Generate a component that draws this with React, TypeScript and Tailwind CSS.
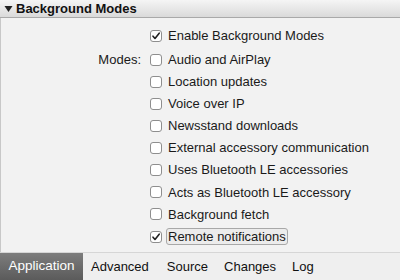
import React from "react";

const Box = ({ checked }: { checked?: boolean }) => (
  <div className="w-[12px] h-[12px] rounded-[3px] border border-[#8e8e8e] bg-white flex items-center justify-center shrink-0">
    {checked && (
      <svg width="10" height="10" viewBox="0 0 10 10">
        <path d="M2 5.2 L4 7.5 L8.2 2.2" fill="none" stroke="#222" strokeWidth="1.6" strokeLinecap="round" strokeLinejoin="round" />
      </svg>
    )}
  </div>
);

const modes: [string, boolean][] = [
  ["Audio and AirPlay", false],
  ["Location updates", false],
  ["Voice over IP", false],
  ["Newsstand downloads", false],
  ["External accessory communication", false],
  ["Uses Bluetooth LE accessories", false],
  ["Acts as Bluetooth LE accessory", false],
  ["Background fetch", false],
  ["Remote notifications", true],
];

export default function App() {
  return (
    <div className="w-[400px] h-[280px] flex flex-col bg-[#f2f2f2] text-[13px] text-[#1a1a1a] overflow-hidden" style={{ fontFamily: '"Liberation Sans", Arial, sans-serif' }}>
      <div className="h-[18px] shrink-0 flex items-center bg-gradient-to-b from-[#f5f5f5] to-[#dadada] border-b border-[#a9a9a9] pl-[4px]">
        <svg width="9" height="8" viewBox="0 0 9 8" className="mr-[3px]">
          <path d="M0.5 1 L8.5 1 L4.5 7 Z" fill="#222" />
        </svg>
        <span className="font-bold text-[13px] text-[#111] leading-none">Background Modes</span>
      </div>
      <div className="flex-1 border-l border-[#c8c8c8] pt-[9px]">
        <div className="flex items-center h-[17px] pl-[149px] gap-[6px]">
          <Box checked />
          <span>Enable Background Modes</span>
        </div>
        <div className="flex mt-[7px]">
          <div className="w-[140px] text-right h-[17px] leading-[17px]">Modes:</div>
          <div className="flex flex-col gap-[5.125px] pl-[9px]">
            {modes.map(([label, c]) => (
              <div key={label} className="flex items-center h-[17px] gap-[6px]">
                <Box checked={c} />
                {c ? (
                  <span className="border border-[#a8a8a8] rounded-[3px] bg-[#ececec] px-[1px] -ml-[2px] leading-[15px]">{label}</span>
                ) : (
                  <span>{label}</span>
                )}
              </div>
            ))}
          </div>
        </div>
      </div>
      <div className="h-[28px] shrink-0 flex items-stretch bg-[#efefef] border-t border-[#d6d6d6] text-[13px]">
        <div className="w-[83px] flex items-center justify-center bg-gradient-to-b from-[#7d7d7d] to-[#5b5b5b] text-white text-[13.5px]">Application</div>
        <div className="flex items-center pl-[8px] text-[#111]">
          <span>Advanced</span>
          <span className="ml-[18px]">Source</span>
          <span className="ml-[16px]">Changes</span>
          <span className="ml-[16px]">Log</span>
        </div>
      </div>
    </div>
  );
}
